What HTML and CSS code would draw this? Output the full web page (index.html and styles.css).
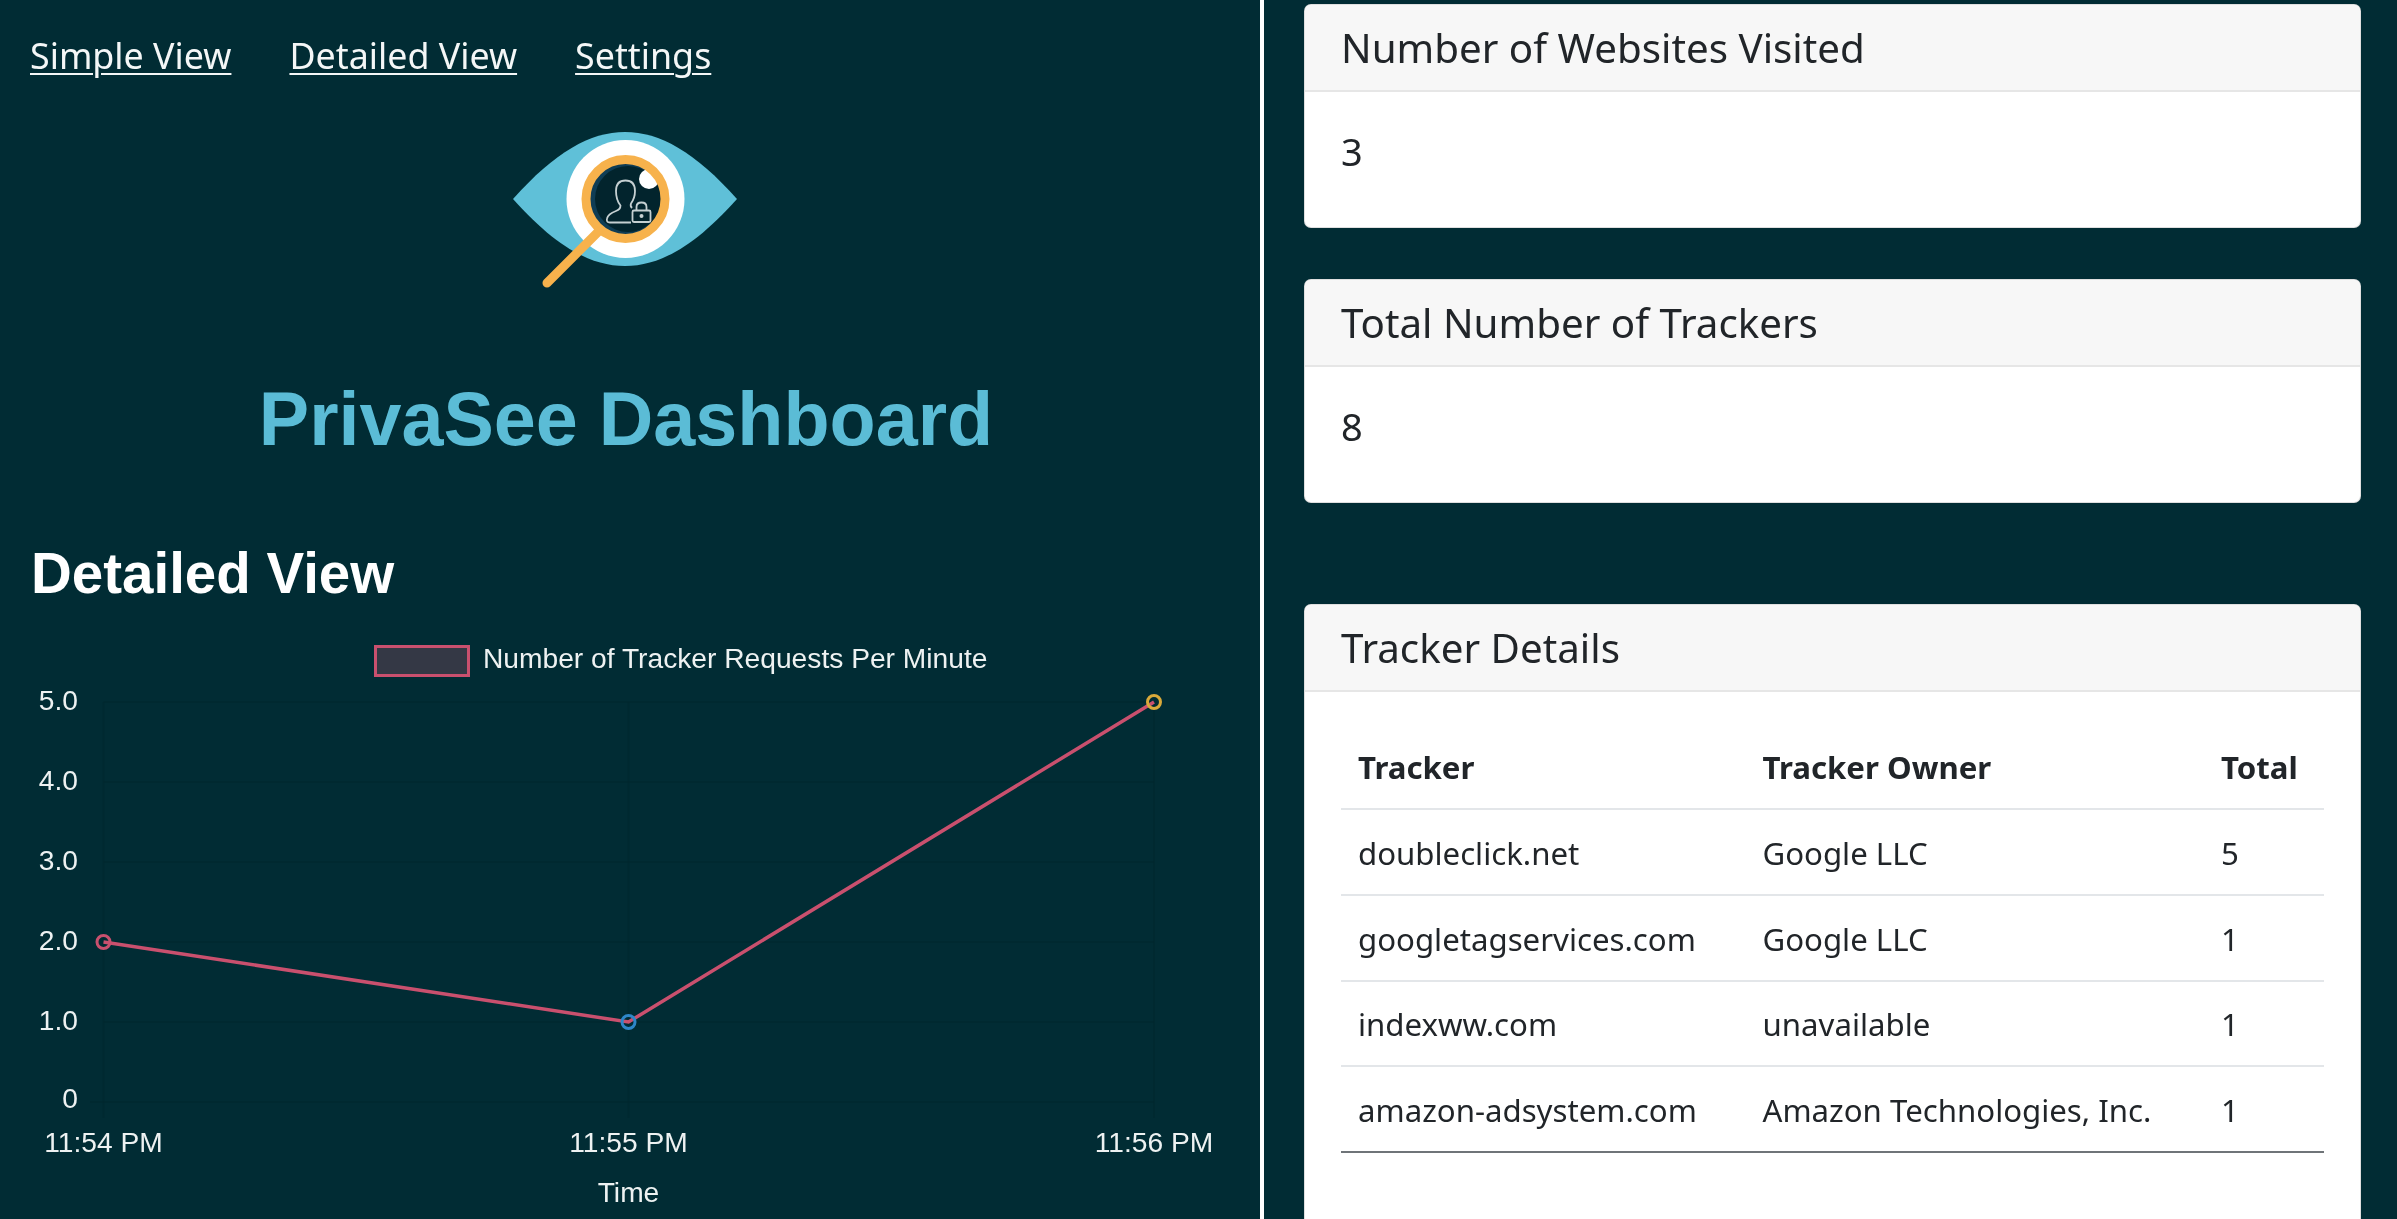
FILE: index.html
```html
<!DOCTYPE html>
<html lang="en">
<head>
<meta charset="utf-8">
<title>PrivaSee Dashboard</title>
<link rel="stylesheet" href="styles.css">
</head>
<body>
<div class="page">
  <section class="left">
    <nav class="nav">
      <a href="#simple">Simple View</a>
      <a href="#detailed">Detailed View</a>
      <a href="#settings">Settings</a>
    </nav>
    <svg class="logo" viewBox="510 125 240 170" width="240" height="170" role="img" aria-label="PrivaSee logo">
      <path class="eye" d="M513 199C555 152 590 132 625 132C660 132 695 152 737 199C695 246 660 266 625 266C590 266 555 246 513 199Z"/>
      <circle class="sclera" cx="625.5" cy="199" r="59"/>
      <circle class="iris" cx="625.5" cy="199" r="37"/>
      <circle class="pupil" cx="628" cy="199" r="33"/>
      <circle class="sclera" cx="649" cy="179" r="10"/>
      <circle class="ring" cx="625.5" cy="199" r="39.5"/>
      <path class="handle" d="M598 232L547 283"/>
      <path class="glyph" d="M631 222.500H610Q606 222.500 607 218.500Q608 214 616 211Q620.500 209.500 620.500 205.500Q616 200 616 191Q616 180.500 625.500 180.500Q635 180.500 635 191Q635 198 631 203.500Q630 206 632 208"/>
      <rect class="glyph" x="632.500" y="210.500" width="18" height="11.500" rx="1.500"/>
      <path class="glyph" d="M636.500 210V207Q636.500 202.500 641.500 202.500Q646.500 202.500 646.500 207V210"/>
      <circle class="lockhole" cx="641.500" cy="216" r="2"/>
    </svg>
    <h1 class="title">PrivaSee Dashboard</h1>
    <h2 class="subtitle">Detailed View</h2>
    <svg class="chart" viewBox="0 640 1260 579" width="1260" height="579" role="img" aria-label="Number of Tracker Requests Per Minute">
      <g class="grid">
        <path d="M103.500 702H1154M103.500 782H1154M103.500 862H1154M103.500 942H1154M103.500 1022H1154M90 1102H1154"/>
        <path d="M103.500 702V1118M628.500 702V1118M1154 702V1118"/>
      </g>
      <rect class="legend-box" x="375.500" y="646.500" width="93" height="29"/>
      <text class="label" x="483" y="668">Number of Tracker Requests Per Minute</text>
      <g class="label axis-y">
        <text x="78" y="710">5.0</text>
        <text x="78" y="790">4.0</text>
        <text x="78" y="870">3.0</text>
        <text x="78" y="950">2.0</text>
        <text x="78" y="1030">1.0</text>
        <text x="78" y="1108">0</text>
      </g>
      <g class="label axis-x">
        <text x="103.500" y="1152">11:54 PM</text>
        <text x="628.500" y="1152">11:55 PM</text>
        <text x="1154" y="1152">11:56 PM</text>
        <text x="628.500" y="1202">Time</text>
      </g>
      <polyline class="line" points="103.500,942 628.500,1022 1154,702"/>
      <circle class="pt pt-red" cx="103.500" cy="942" r="6.500"/>
      <circle class="pt pt-blue" cx="628.500" cy="1022" r="6.500"/>
      <circle class="pt pt-yellow" cx="1154" cy="702" r="6.500"/>
    </svg>
  </section>

  <section class="right">
    <div class="card card-small">
      <div class="card-header">Number of Websites Visited</div>
      <div class="card-body">3</div>
    </div>
    <div class="card card-small">
      <div class="card-header">Total Number of Trackers</div>
      <div class="card-body">8</div>
    </div>
    <div class="card card-table">
      <div class="card-header">Tracker Details</div>
      <div class="table-body">
        <table class="table">
          <colgroup>
            <col class="col-tracker">
            <col class="col-owner">
            <col class="col-total">
          </colgroup>
          <thead>
            <tr><th>Tracker</th><th>Tracker Owner</th><th>Total</th></tr>
          </thead>
          <tbody>
            <tr><td>doubleclick.net</td><td>Google LLC</td><td>5</td></tr>
            <tr><td>googletagservices.com</td><td>Google LLC</td><td>1</td></tr>
            <tr><td>indexww.com</td><td>unavailable</td><td>1</td></tr>
            <tr><td>amazon-adsystem.com</td><td>Amazon Technologies, Inc.</td><td>1</td></tr>
          </tbody>
        </table>
      </div>
    </div>
  </section>
</div>
</body>
</html>
```
FILE: styles.css
```css
* { box-sizing: border-box; }
html, body { margin: 0; height: 100%; }
body { background: #012c34; overflow: hidden; }

.page { display: flex; height: 1219px; overflow: hidden; filter: blur(.5px); }

.left {
  flex: 0 0 1264px;
  border-right: 4px solid #fff;
  color: #fff;
  font-family: "Liberation Sans", Arial, sans-serif;
}

.nav {
  display: flex;
  gap: 58px;
  padding: 30px 0 0 30px;
  margin-bottom: 45px;
  font-family: "Noto Sans", "Open Sans", sans-serif;
  font-size: 35.800px;
  line-height: 50px;
}
.nav a { color: #f4f7f7; text-decoration: underline; text-underline-offset: 4px; text-decoration-thickness: 2px; }

.logo { display: block; margin-left: 510px; }
.eye { fill: #5fc0d8; }
.sclera { fill: #fff; }
.iris { fill: #0f3d55; }
.pupil { fill: #02242d; }
.ring { fill: none; stroke: #f7b24c; stroke-width: 9; }
.handle { fill: none; stroke: #f7b24c; stroke-width: 9; stroke-linecap: round; }
.glyph { fill: none; stroke: #c5d0d2; stroke-width: 1.800; stroke-linejoin: round; }
.lockhole { fill: #c5d0d2; }

.title {
  margin: 79px 0 0;
  width: 1252px;
  text-align: center;
  color: #5bbcd6;
  font-size: 75.500px;
  font-weight: 700;
  line-height: 90px;
}
.subtitle {
  margin: 78px 0 0 31px;
  color: #fff;
  font-size: 56.500px;
  font-weight: 700;
  line-height: 64px;
}

.chart { display: block; margin-top: 34px; }
.grid path { fill: none; stroke: rgba(0, 0, 0, .06); stroke-width: 2; }
.legend-box { fill: #343845; stroke: #c9506e; stroke-width: 3; }
.label { fill: #eef2f2; font-size: 28.200px; font-family: "Liberation Sans", Arial, sans-serif; }
.axis-y { text-anchor: end; }
.axis-x { text-anchor: middle; }
.line { fill: none; stroke: #c9506e; stroke-width: 3.500; }
.pt { fill: none; stroke-width: 3; }
.pt-red { stroke: #c9506e; }
.pt-blue { stroke: #2e86c8; }
.pt-yellow { stroke: #d9a93a; }

.right {
  flex: 1;
  display: flex;
  flex-direction: column;
  padding: 4px 38px 0 40px;
  font-family: "Noto Sans", "Open Sans", sans-serif;
  color: #212529;
}

.card {
  flex: none;
  background: #fff;
  border: 1px solid rgba(0, 0, 0, .125);
  border-radius: 7px;
  overflow: hidden;
}
.card-small { height: 224px; margin-bottom: 51px; display: flex; flex-direction: column; }
.card-table { margin-top: 49.500px; height: 700px; }

.card-header {
  height: 87px;
  padding: 0 36px;
  background: #f7f7f7;
  border-bottom: 2px solid #e6e6e6;
  font-size: 40.300px;
  line-height: 86px;
}
.card-body {
  padding: 36px 36px 0;
  font-size: 38px;
  line-height: 46px;
}

.table-body { padding: 34.500px 36px 0; }
.table {
  width: 983px;
  table-layout: fixed;
  border-collapse: collapse;
  font-size: 31.200px;
}
.col-tracker { width: 404.500px; }
.col-owner { width: 458.500px; }
.col-total { width: 120px; }
.table th, .table td { padding: 0 17px; text-align: left; }
.table th { height: 83px; font-weight: 700; border-bottom: 2px solid #e3e6e9; }
.table td { height: 85.750px; padding-top: 2px; border-bottom: 2px solid #e3e6e9; }
.table tbody tr:last-child td { border-bottom-color: #6f7478; }
```
